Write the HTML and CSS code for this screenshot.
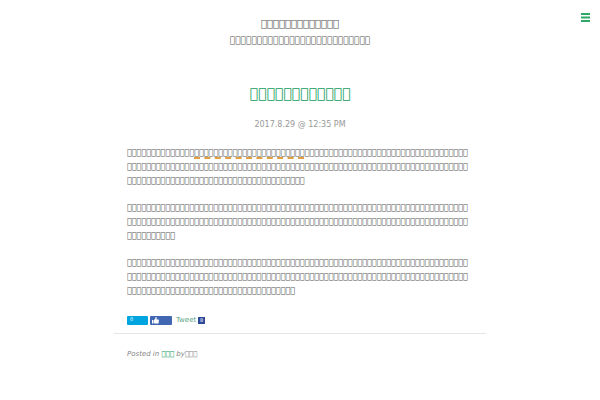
FILE: index.html
```
<!DOCTYPE html>
<html lang="ja">
<head>
    <meta charset="UTF-8">
    <meta name="viewport" content="width=device-width, initial-scale=1.0">
    <title>Blog</title>
    <link rel="stylesheet" href="styles.css">
</head>
<body>
    <header class="site-header">
        <div class="site-title" data-boxes="13"></div>
        <div class="site-description" data-boxes="26"></div>
        <button class="menu-button" type="button" aria-label="Menu">
            <svg width="9" height="9" viewBox="0 0 9 9"><path d="M0 1h9M0 4.5h9M0 8h9" stroke="#2fa866" stroke-width="1.9"/></svg>
        </button>
    </header>
    <main class="post">
        <h1 class="post-title"><a href="#" data-boxes="12"></a></h1>
        <div class="post-date">2017.8.29 @ 12:35 PM</div>
        <div class="post-content">
            <p><span data-boxes="14"></span><span class="marker" data-boxes="23"></span><span data-boxes="142"></span></p>
            <p data-boxes="152"></p>
            <p data-boxes="177"></p>
        </div>
        <div class="share">
            <a class="share-button hatena" href="#">0</a>
            <a class="share-button like" href="#" aria-label="Like">
                <svg width="7" height="7" viewBox="0 0 14 14"><path fill="#fff" d="M0 6h3v7H0zM4 6l3-3V0c2-1 3 1 2 5h4c1 0 1 1 0 8H5l-1-1z"/></svg>
            </a>
            <a class="tweet" href="#">Tweet</a>
            <a class="share-icon" href="#">8</a>
        </div>
        <footer class="post-meta">Posted in <a href="#" data-boxes="3"></a> by<span data-boxes="3"></span></footer>
    </main>

    <script>
        // characters without a glyph, shown as boxes
        document.querySelectorAll('[data-boxes]').forEach(el => {
            el.textContent = '\uE123'.repeat(el.dataset.boxes);
        });
    </script>
</body>
</html>
```
FILE: styles.css
```
body {
    margin: 0;
    background: #fff;
    color: #555;
    font-family: "DejaVu Sans", sans-serif;
    font-size: 8px;
    line-height: 14px;
}

a {
    color: #169b5b;
    text-decoration: none;
}

.site-header {
    position: relative;
    padding: 16px 0 32px;
    text-align: center;
    line-height: 16px;
}

.site-title {
    font-size: 10px;
}

.site-description {
    font-size: 9px;
}

.menu-button {
    position: absolute;
    top: 13px;
    right: 10px;
    display: flex;
    padding: 0;
    border: 0;
    background: none;
}

.post {
    width: 62%;
    margin: 0 auto;
}

.post-title {
    margin: 0;
    text-align: center;
    font-size: 14px;
    font-weight: normal;
    line-height: 26px;
}

.post-date {
    margin: 12px 0 14px;
    text-align: center;
    color: #999;
}

.post-content {
    padding: 0 16px 0 13px;
    overflow-wrap: anywhere;
}

.post-content p {
    margin: 0 0 13px;
}

.marker {
    text-decoration: underline dashed 2px #e0a040;
    text-underline-offset: 2px;
    text-decoration-skip-ink: none;
}

.share {
    display: flex;
    align-items: center;
    gap: 2px;
    padding: 2px 13px 6px;
    border-bottom: 1px solid #e5e5e5;
    font-size: 7px;
}

.share-button {
    box-sizing: border-box;
    width: 21px;
    height: 9px;
    border-radius: 1px;
}

.hatena {
    background: #00a4de;
    color: #fff;
    font-size: 5px;
    line-height: 7px;
    text-indent: 3px;
}

.like {
    display: flex;
    align-items: center;
    width: 22px;
    padding-left: 2px;
    background: #4267b2;
}

.tweet {
    margin-left: 2px;
    color: #5aa585;
}

.share-icon {
    width: 7px;
    height: 7px;
    background: #2d4a9a;
    color: #fff;
    font-size: 5px;
    line-height: 7px;
    text-align: center;
}

.post-meta {
    padding: 13px;
    color: #888;
    font-size: 7px;
    font-style: italic;
}
```
